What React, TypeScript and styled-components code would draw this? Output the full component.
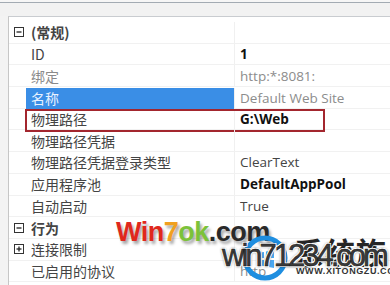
import React from 'react'
import styled, { createGlobalStyle } from 'styled-components'

const GlobalStyle = createGlobalStyle`
    html, body { margin: 0; padding: 0; background: #f3f3f3; }
    body { font-family: "Noto Sans CJK SC", "Noto Sans", sans-serif; }
`;

type Prop = {
    name: string;
    value?: string;
    group?: 'open' | 'closed';
    bold?: boolean;
    dimName?: boolean;
    dimValue?: boolean;
    selected?: boolean;
    marked?: boolean;
};

const rows: Prop[] = [
    { name: '(常规)', group: 'open' },
    { name: 'ID', value: '1', bold: true },
    { name: '绑定', value: 'http:*:8081:', dimName: true, dimValue: true },
    { name: '名称', value: 'Default Web Site', dimValue: true, selected: true },
    { name: '物理路径', value: 'G:\\Web', bold: true, marked: true },
    { name: '物理路径凭据' },
    { name: '物理路径凭据登录类型', value: 'ClearText' },
    { name: '应用程序池', value: 'DefaultAppPool', bold: true },
    { name: '自动启动', value: 'True' },
    { name: '行为', group: 'open' },
    { name: '连接限制', group: 'closed' },
    { name: '已启用的协议', value: 'http', dimValue: true },
];

const Toggle: React.FC<{ open: boolean }> = ({ open }) => (
    <svg width="10" height="10" viewBox="0 0 10 10">
        <rect x="0.5" y="0.5" width="9" height="9" fill="#fff" stroke="#333" />
        <line x1="2.5" y1="5" x2="7.5" y2="5" stroke="#222" strokeWidth="1.3" />
        {!open && <line x1="5" y1="2.5" x2="5" y2="7.5" stroke="#222" strokeWidth="1.3" />}
    </svg>
);

const WinLogo = () => (
    <svg width="50" height="50" viewBox="0 0 50 50">
        <circle cx="25" cy="25" r="20" fill="none" stroke="#1e8ee0" strokeWidth="5" />
        <path d="M17 20 L24 19 L24 25 L17 25 Z M26 18.5 L34 17 L34 25 L26 25 Z M17 27 L24 27 L24 33 L17 32 Z M26 27 L34 27 L34 35 L26 33.5 Z" fill="#2a9af0" opacity="0.85" />
    </svg>
);

export default function App() {
    return (
        <Frame>
            <GlobalStyle />
            <TopStrip />
            <Panel>
                {rows.map((r) => (
                    <Row key={r.name} marked={!!r.marked}>
                        <Gutter>{r.group && <Toggle open={r.group === 'open'} />}</Gutter>
                        <Name selected={!!r.selected} dim={!!r.dimName} strong={r.group === 'open'}>{r.name}</Name>
                        <Value strong={!!r.bold} dim={!!r.dimValue}>{r.value}</Value>
                    </Row>
                ))}
            </Panel>
            <Win7ok>
                <Red>Win</Red><Orange>7</Orange><Green>ok</Green><Dark>.com</Dark>
            </Win7ok>
            <LogoSpot><WinLogo /></LogoSpot>
            <Brand>系统族</Brand>
            <BrandUrl>WWW.XITONGZU.COM</BrandUrl>
            <Site>win71234.com</Site>
        </Frame>
    )
}

const Frame = styled.div`
    position: relative;
    width: 390px;
    height: 285px;
    overflow: hidden;
    background: #f3f3f3;
`;

const TopStrip = styled.div`
    height: 16px;
    box-sizing: border-box;
    border-top: 2px solid #f6f6f6;
    background: linear-gradient(#a3abb3 0 1px, #f2f2f2 1px);
`;

const Panel = styled.div`
    margin-left: 8px;
    height: 269px;
    padding-top: 5px;
    box-sizing: border-box;
    background: #fff;
    border-left: 1px solid #c6c6c6;
    border-top: 1px solid #c9ccd0;
`;

const Row = styled.div<{ marked: boolean }>`
    position: relative;
    display: grid;
    grid-template-columns: 17px 209px 1fr;
    height: 21.7px;
    align-items: center;
    box-sizing: border-box;
    border-bottom: 1px solid #f1f1f1;

    &::after {
        content: "";
        display: ${p => p.marked ? 'block' : 'none'};
        position: absolute;
        left: 16px;
        top: 0;
        width: 300px;
        height: 23px;
        box-sizing: border-box;
        border: 2px solid #a3262e;
    }
`;

const Gutter = styled.div`
    display: flex;
    align-items: center;
    justify-content: center;
    padding-left: 2px;
    height: 100%;
`;

const Name = styled.div<{ selected: boolean; dim: boolean; strong: boolean }>`
    height: 100%;
    display: flex;
    align-items: center;
    padding-left: 5px;
    margin-top: ${p => p.selected ? '1px' : '0'};
    font-size: 14px;
    font-weight: ${p => p.strong ? 700 : 400};
    color: ${p => p.selected ? '#e8f2ff' : p.dim ? '#8a8a8a' : '#444'};
    background: ${p => p.selected ? '#3a8ee6' : 'transparent'};
    border-right: 1px solid #f0f0f0;
    white-space: nowrap;
`;

const Value = styled.div<{ strong: boolean; dim: boolean }>`
    padding-left: 5px;
    font-family: "Open Sans", "Noto Sans", sans-serif;
    font-size: 13.5px;
    font-weight: ${p => p.strong ? 700 : 400};
    color: ${p => p.strong ? '#111' : p.dim ? '#8c8c8c' : '#444'};
    white-space: nowrap;
`;

const Win7ok = styled.div`
    position: absolute;
    left: 116px;
    top: 217px;
    font-family: "Liberation Sans", Arial, sans-serif;
    font-weight: 700;
    font-size: 27px;
    letter-spacing: -0.5px;
    text-shadow: 2px 3px 3px rgba(0, 0, 0, 0.35);
`;

const Red = styled.span` color: #e0281c; `;
const Orange = styled.span` color: #f0a020; `;
const Green = styled.span` color: #7cc23a; `;
const Dark = styled.span` color: #2a2a2a; `;

const LogoSpot = styled.div`
    position: absolute;
    left: 240px;
    top: 233px;
`;

const Brand = styled.div`
    position: absolute;
    left: 294px;
    top: 229px;
    font-size: 30px;
    font-weight: 700;
    color: #262626;
    letter-spacing: 1px;
    white-space: nowrap;
`;

const BrandUrl = styled.div`
    position: absolute;
    left: 296px;
    top: 266px;
    font-family: "Liberation Sans", Arial, sans-serif;
    font-size: 9px;
    font-weight: 700;
    color: #333;
    letter-spacing: 0.6px;
`;

const Site = styled.div`
    position: absolute;
    left: 222px;
    top: 238px;
    font-family: "Liberation Sans", Arial, sans-serif;
    font-size: 31px;
    letter-spacing: -3px;
    color: #3b3b3b;
    -webkit-text-stroke: 0.5px #111;
    text-shadow: 0 0 1px #fff, 1px 1px 0 #fff, -1px -1px 0 #fff, 1px -1px 0 #fff, -1px 1px 0 #fff, 0 0 3px #000;
    white-space: nowrap;
`;
